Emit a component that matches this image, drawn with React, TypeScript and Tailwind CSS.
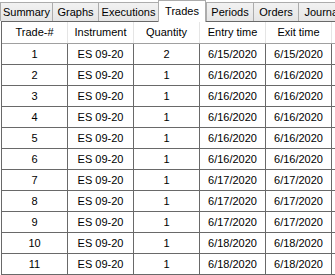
import React from 'react';

const tabs = [
  { label: 'Summary', w: 'w-[52px]' },
  { label: 'Graphs', w: 'w-[46px]' },
  { label: 'Executions', w: 'w-[60px]' },
  { label: 'Trades', w: 'w-[48px]', active: true },
  { label: 'Periods', w: 'w-[47px]' },
  { label: 'Orders', w: 'w-[45px]' },
  { label: 'Journal', w: 'w-[48px]' },
];

const columns = ['Trade-#', 'Instrument', 'Quantity', 'Entry time', 'Exit time'];

const trades = [
  { id: 1, qty: 2, entry: '6/15/2020', exit: '6/15/2020' },
  { id: 2, qty: 1, entry: '6/16/2020', exit: '6/16/2020' },
  { id: 3, qty: 1, entry: '6/16/2020', exit: '6/16/2020' },
  { id: 4, qty: 1, entry: '6/16/2020', exit: '6/16/2020' },
  { id: 5, qty: 1, entry: '6/16/2020', exit: '6/16/2020' },
  { id: 6, qty: 1, entry: '6/16/2020', exit: '6/16/2020' },
  { id: 7, qty: 1, entry: '6/17/2020', exit: '6/17/2020' },
  { id: 8, qty: 1, entry: '6/17/2020', exit: '6/17/2020' },
  { id: 9, qty: 1, entry: '6/17/2020', exit: '6/17/2020' },
  { id: 10, qty: 1, entry: '6/18/2020', exit: '6/18/2020' },
  { id: 11, qty: 1, entry: '6/18/2020', exit: '6/18/2020' },
];

export default function App() {
  return (
    <div className="w-[335px] h-[275px] overflow-hidden bg-white text-[11px] text-black font-['Liberation_Sans',Arial,sans-serif]">
      {/* tab strip */}
      <div className="flex items-end h-[21px] whitespace-nowrap">
        {tabs.map((t) =>
          t.active ? (
            <div
              key={t.label}
              className={`${t.w} shrink-0 h-[22px] -mb-px relative z-10 flex items-center justify-center bg-white border border-b-0 border-[#acacac]`}
            >
              {t.label}
            </div>
          ) : (
            <div
              key={t.label}
              className={`${t.w} shrink-0 h-[19px] flex items-center justify-center border border-b-0 border-r-0 border-[#acacac] bg-gradient-to-b from-[#f2f2f2] to-[#e5e5e5] pt-px`}
            >
              {t.label}
            </div>
          )
        )}
      </div>

      {/* grid */}
      <div className="ml-px border-l border-t border-[#696969] w-max">
        <div className="flex h-[22px] border-b border-[#a0a0a0] bg-white">
          {columns.map((c) => (
            <div key={c} className="w-[66px] shrink-0 border-r border-[#e5e5e5] flex items-center justify-center">
              {c}
            </div>
          ))}
          <div className="w-[40px] shrink-0" />
        </div>
        {trades.map((r) => (
          <div key={r.id} className="flex h-[21px] border-b border-[#696969]">
            <div className="w-[66px] shrink-0 border-r border-[#696969] flex items-center justify-center">{r.id}</div>
            <div className="w-[66px] shrink-0 border-r border-[#696969] flex items-center justify-center">ES 09-20</div>
            <div className="w-[66px] shrink-0 border-r border-[#696969] flex items-center justify-center">{r.qty}</div>
            <div className="w-[66px] shrink-0 border-r border-[#696969] flex items-center justify-center">{r.entry}</div>
            <div className="w-[66px] shrink-0 border-r border-[#696969] flex items-center justify-center">{r.exit}</div>
            <div className="w-[40px] shrink-0" />
          </div>
        ))}
      </div>
    </div>
  );
}
